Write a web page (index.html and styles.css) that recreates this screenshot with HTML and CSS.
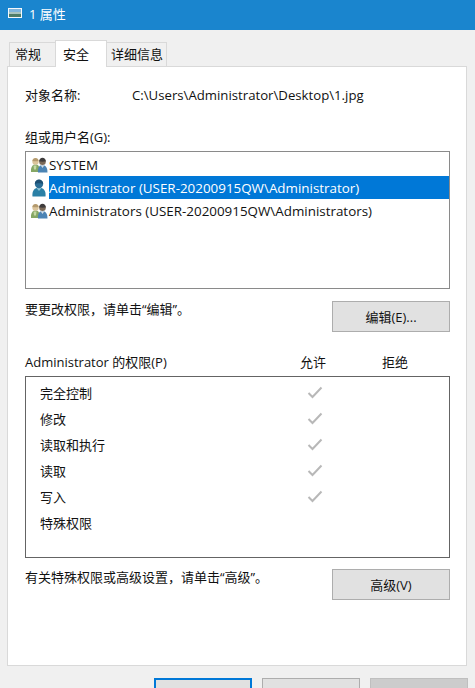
FILE: index.html
```html
<!DOCTYPE html>
<html lang="zh-CN">
<head>
  <meta charset="UTF-8">
  <title>1 属性</title>
  <link rel="stylesheet" href="styles.css">
</head>
<body>

<svg width="0" height="0" class="defs">
  <symbol id="icon-group" viewBox="0 0 18 16">
    <path d="M1 15c-.5-4 1-6.500 3-7.500h3c2 1 3 3 3 7.500z" fill="#86a765"/>
    <path d="M3.500 8.500h3l-.5 4h-2z" fill="#c4d8a4"/>
    <circle cx="5.500" cy="4.500" r="3.200" fill="#dcc59c"/>
    <path d="M2.400 4c.3-2 1.600-3 3.100-3s2.800 1 3.100 3c-2 .3-4.200.3-6.200 0z" fill="#b49a6e"/>
    <path d="M8 15.500c-.5-4 1-6.500 2.500-7h4c2 1 3 3 3 7z" fill="#4c84b4"/>
    <path d="M10.800 8.500h3.400l-1.700 2.500z" fill="#d5dfe6"/>
    <circle cx="12.500" cy="4.800" r="3.300" fill="#7c6a58"/>
    <path d="M9.200 4.500c0-2.500 1.500-3.800 3.300-3.800s3.300 1.300 3.300 3.800c-2 .2-4.600.2-6.600 0z" fill="#3f3c3c"/>
  </symbol>
  <symbol id="icon-user" viewBox="0 0 18 18">
    <path d="M2.500 17.500c-.5-4.500 1-7.500 4-8.500h5c3 1 4.500 4 4 8.500z" fill="#2b80a6"/>
    <path d="M6.500 9h5l-2.500 3z" fill="#8fc3d6"/>
    <circle cx="9" cy="5" r="4.200" fill="#2c6e96"/>
    <path d="M4.800 5c0-3 2-4.500 4.200-4.500s4.200 1.500 4.200 4.500c-1.500-1-6.900-1-8.400 0z" fill="#1d4f73"/>
  </symbol>
  <symbol id="icon-check" viewBox="0 0 16 14">
    <path d="M1.500 7l4 4 9-9.500" fill="none" stroke="#b8b8b8" stroke-width="2"/>
  </symbol>
</svg>

<div class="titlebar">
  <svg class="title-icon" width="14" height="10" viewBox="0 0 14 10">
    <rect width="14" height="10" fill="#f4f8fb"/>
    <rect x="1" y="1" width="12" height="3" fill="#7fb4dc"/>
    <rect x="1" y="4" width="12" height="2" fill="#a9c4c0"/>
    <rect x="1" y="6" width="12" height="3" fill="#4f7d68"/>
  </svg>
  <span>1 属性</span>
</div>

<div class="tabs">
  <div class="tab tab-general">常规</div>
  <div class="tab active">安全</div>
  <div class="tab tab-details">详细信息</div>
</div>

<div class="panel">
  <div class="object-row">
    <span class="object-label">对象名称:</span>
    <span class="object-path">C:\Users\Administrator\Desktop\1.jpg</span>
  </div>

  <div class="list-label">组或用户名(G):</div>
  <div class="user-list">
    <div class="user-row">
      <svg class="user-icon"><use href="#icon-group"/></svg>
      <span class="user-name">SYSTEM</span>
    </div>
    <div class="user-row">
      <svg class="user-icon"><use href="#icon-user"/></svg>
      <span class="user-name selected">Administrator (USER-20200915QW\Administrator)</span>
    </div>
    <div class="user-row">
      <svg class="user-icon"><use href="#icon-group"/></svg>
      <span class="user-name">Administrators (USER-20200915QW\Administrators)</span>
    </div>
  </div>

  <div class="action-row edit-row">
    <span class="action-text">要更改权限，请单击“编辑”。</span>
    <button class="btn">编辑(E)...</button>
  </div>

  <div class="perm-head">
    <span class="perm-title">Administrator 的权限(P)</span>
    <span class="perm-col">允许</span>
    <span class="perm-col deny">拒绝</span>
  </div>
  <div class="perm-list">
    <div class="perm-row"><span class="perm-name">完全控制</span><svg class="check"><use href="#icon-check"/></svg></div>
    <div class="perm-row"><span class="perm-name">修改</span><svg class="check"><use href="#icon-check"/></svg></div>
    <div class="perm-row"><span class="perm-name">读取和执行</span><svg class="check"><use href="#icon-check"/></svg></div>
    <div class="perm-row"><span class="perm-name">读取</span><svg class="check"><use href="#icon-check"/></svg></div>
    <div class="perm-row"><span class="perm-name">写入</span><svg class="check"><use href="#icon-check"/></svg></div>
    <div class="perm-row"><span class="perm-name">特殊权限</span></div>
  </div>

  <div class="action-row">
    <span class="action-text">有关特殊权限或高级设置，请单击“高级”。</span>
    <button class="btn">高级(V)</button>
  </div>
</div>

<div class="footer">
  <button class="btn foot-btn default"></button>
  <button class="btn foot-btn"></button>
  <button class="btn foot-btn disabled">应用(A)</button>
</div>

</body>
</html>
```

FILE: styles.css
```css
html, body {
  height: 688px;
  overflow: hidden;
}

body {
  margin: 0;
  background: #f0f0f0;
  color: #111;
  font-family: "Open Sans", "Noto Sans CJK SC", sans-serif;
  font-size: 13px;
}

.defs {
  position: absolute;
}

.titlebar {
  display: flex;
  align-items: center;
  gap: 7px;
  height: 26px;
  padding: 0 0 4px 8px;
  background: #1a85ce;
  color: #fff;
}

.title-icon {
  flex: none;
}

.tabs {
  display: flex;
  align-items: flex-end;
  height: 36px;
  padding-left: 9px;
}

.tab {
  box-sizing: border-box;
  height: 24px;
  border: 1px solid #d9d9d9;
  border-bottom: none;
  line-height: 23px;
}

.tab-general {
  width: 47px;
  padding-left: 5px;
}

.tab.active {
  position: relative;
  z-index: 1;
  width: 52px;
  height: 27px;
  margin: 0 -1px -1px -1px;
  padding-left: 7px;
  background: #fff;
  line-height: 26px;
}

.tab-details {
  width: 61px;
  padding-left: 4px;
}

.panel {
  height: 600px;
  box-sizing: border-box;
  margin: 0 8px 0 7px;
  padding: 19px 16px 0 17px;
  background: #fff;
  border: 1px solid #d9d9d9;
}

.object-row {
  display: flex;
  height: 18px;
  line-height: 18px;
}

.object-label {
  width: 107px;
}

.object-path {
  font-size: 13.2px;
}

.list-label {
  margin-top: 24px;
  line-height: 18px;
}

.user-list {
  height: 135px;
  margin-top: 5px;
  padding: 1px 0 0 4px;
  background: #fff;
  border: 1px solid #8a8a8a;
}

.user-row {
  display: flex;
  align-items: center;
  gap: 1px;
  height: 23px;
}

.user-icon {
  flex: none;
  width: 18px;
  height: 18px;
}

.user-name {
  height: 23px;
  font-size: 13.4px;
  line-height: 25px;
  white-space: nowrap;
}

.user-name.selected {
  flex: 1;
  background: #0078d7;
  color: #fff;
}

.action-row {
  display: flex;
  justify-content: space-between;
  margin-top: 11px;
}

.edit-row {
  margin-top: 12px;
}

.action-text {
  margin-top: -1px;
  line-height: 18px;
}

.btn {
  width: 118px;
  height: 31px;
  padding: 0;
  background: #e1e1e1;
  border: 1px solid #adadad;
  color: #111;
  font: inherit;
}

.perm-head {
  display: flex;
  margin-top: 21px;
  height: 18px;
  line-height: 18px;
}

.perm-title {
  flex: none;
  width: 275px;
}

.perm-col {
  flex: none;
  width: 82px;
}

.perm-col.deny {
  width: 60px;
}

.perm-list {
  height: 176px;
  margin-top: 5px;
  padding: 4px 0 0 14px;
  border: 1px solid #646464;
}

.perm-row {
  display: flex;
  align-items: center;
  height: 26px;
}

.perm-name {
  flex: none;
  width: 267px;
  padding-bottom: 4px;
}

.check {
  display: block;
  width: 16px;
  height: 14px;
  margin-top: -3px;
}

.footer {
  display: flex;
  justify-content: flex-end;
  gap: 10px;
  margin-top: 12px;
  padding-right: 7px;
}

.foot-btn {
  width: 98px;
  height: 30px;
}

.foot-btn.default {
  border: 2px solid #0078d7;
}

.foot-btn.disabled {
  background: #ccc;
  border-color: #bfbfbf;
  color: #838383;
}
```
